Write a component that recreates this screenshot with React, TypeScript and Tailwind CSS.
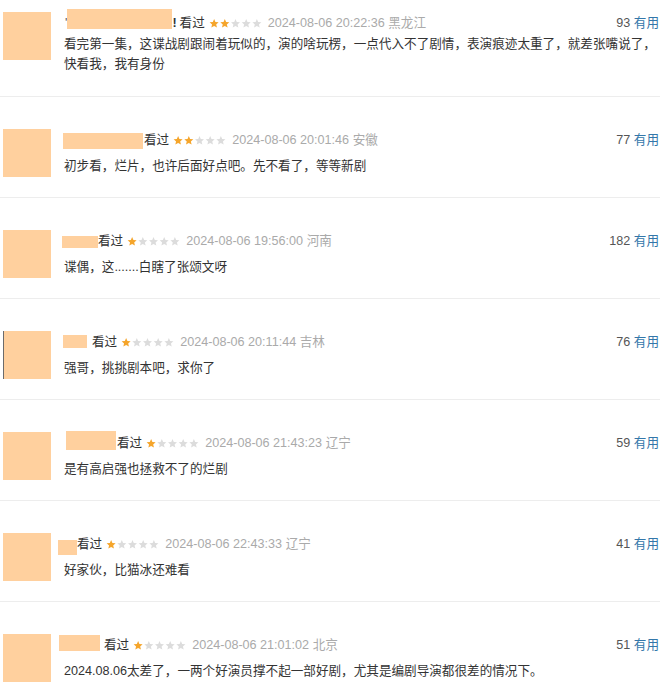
type Review = {
  mask: { w: number; h: number; ml: number; dy: number };
  pre?: string;
  post?: string;
  gap: number;
  stars: number;
  time: string;
  loc: string;
  votes: number;
  text: string;
  edge?: boolean;
};

const reviews: Review[] = [
  {
    mask: { w: 105, h: 20, ml: 0, dy: -4 },
    pre: "'",
    post: "!",
    gap: 3,
    stars: 2,
    time: "2024-08-06 20:22:36",
    loc: "黑龙江",
    votes: 93,
    text: "看完第一集，这谍战剧跟闹着玩似的，演的啥玩楞，一点代入不了剧情，表演痕迹太重了，就差张嘴说了，快看我，我有身份",
  },
  {
    mask: { w: 80, h: 16, ml: -1, dy: 1 },
    gap: 1,
    stars: 2,
    time: "2024-08-06 20:01:46",
    loc: "安徽",
    votes: 77,
    text: "初步看，烂片，也许后面好点吧。先不看了，等等新剧",
  },
  {
    mask: { w: 36, h: 12, ml: -2, dy: 1 },
    gap: 0,
    stars: 1,
    time: "2024-08-06 19:56:00",
    loc: "河南",
    votes: 182,
    text: "谍偶，这.......白瞎了张颂文呀",
  },
  {
    mask: { w: 24, h: 13, ml: -1, dy: -1 },
    gap: 5,
    stars: 1,
    time: "2024-08-06 20:11:44",
    loc: "吉林",
    votes: 76,
    text: "强哥，挑挑剧本吧，求你了",
    edge: true,
  },
  {
    mask: { w: 50, h: 19, ml: 2, dy: -3 },
    gap: 1,
    stars: 1,
    time: "2024-08-06 21:43:23",
    loc: "辽宁",
    votes: 59,
    text: "是有高启强也拯救不了的烂剧",
  },
  {
    mask: { w: 19, h: 15, ml: -6, dy: 3 },
    gap: 0,
    stars: 1,
    time: "2024-08-06 22:43:33",
    loc: "辽宁",
    votes: 41,
    text: "好家伙，比猫冰还难看",
  },
  {
    mask: { w: 41, h: 16, ml: -5, dy: -2 },
    gap: 4,
    stars: 1,
    time: "2024-08-06 21:01:02",
    loc: "北京",
    votes: 51,
    text: "2024.08.06太差了，一两个好演员撑不起一部好剧，尤其是编剧导演都很差的情况下。",
  },
];

const STAR = "12,1.5 15,8.6 22.5,9.2 16.8,14.1 18.6,21.6 12,17.6 5.4,21.6 7.2,14.1 1.5,9.2 9,8.6";

function Stars({ n }: { n: number }) {
  return (
    <svg width="53" height="11" viewBox="0 0 124 24" className="shrink-0">
      {[0, 1, 2, 3, 4].map((i) => (
        <polygon
          key={i}
          points={STAR}
          transform={`translate(${i * 25} 0)`}
          fill={i < n ? "#f5a52b" : "#dcdcdc"}
        />
      ))}
    </svg>
  );
}

export default function App() {
  return (
    <div
      className="min-h-screen bg-white text-[#333] text-[12.6px]"
      style={{ fontFamily: '"Liberation Sans", Arial, "Noto Sans CJK SC", sans-serif' }}
    >
      {reviews.map((r, i) => (
        <div
          key={i}
          className={`flex pl-[3px] pr-[1px] border-b border-[#ededed] ${i === 0 ? "pt-[12px] pb-[22px]" : "pt-[32px] pb-[20px]"}`}
        >
          <div
            className={`w-12 h-12 shrink-0 bg-[#ffd09e] ${r.edge ? "border-l border-[#6b6b6b]" : ""}`}
          />
          <div className="ml-[13px] flex-1 min-w-0">
            <div className="h-[22px] flex items-center whitespace-nowrap">
              {r.pre && <span className="ml-[1px] text-[#555] leading-none">{r.pre}</span>}
              <span
                className="inline-block shrink-0 bg-[#ffd09e]"
                style={{
                  width: r.mask.w,
                  height: r.mask.h,
                  marginLeft: r.mask.ml,
                  transform: `translateY(${r.mask.dy}px)`,
                }}
              />
              {r.post && <span className="text-[#333] font-bold">{r.post}</span>}
              <span className="text-[#333]" style={{ marginLeft: r.gap }}>
                看过
              </span>
              <span className="ml-[4px] flex items-center">
                <Stars n={r.stars} />
              </span>
              <span className="ml-[6px] text-[#aaa]">
                {r.time} {r.loc}
              </span>
              <span className="ml-auto text-[#555]">
                {r.votes} <span className="text-[#3377aa]">有用</span>
              </span>
            </div>
            <p className={`leading-[20px] text-[#333] ${i === 0 ? "mt-0" : "mt-[5px]"}`}>{r.text}</p>
          </div>
        </div>
      ))}
    </div>
  );
}
